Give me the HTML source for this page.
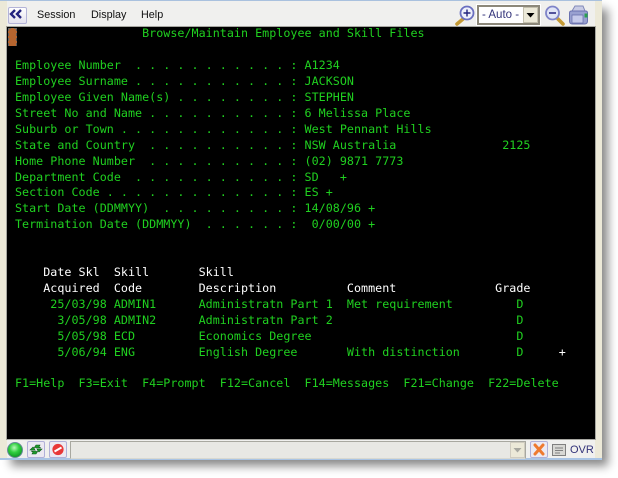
<!DOCTYPE html>
<html><head><meta charset="utf-8"><style>
html,body{margin:0;padding:0;background:#fff}
body{width:618px;height:478px;position:relative;overflow:hidden;font-family:"Liberation Sans",sans-serif}
div{position:absolute;box-sizing:border-box}
svg{position:absolute;overflow:visible}
.l{position:absolute;left:15px;margin:-1px 0 0;font:11.7px/14px "DejaVu Sans Mono","Liberation Mono",monospace;letter-spacing:.025px;color:#20d020;white-space:pre}
.w{color:#fff}
.m{position:absolute;top:9px;font-size:10.8px;line-height:13px;color:#111}
</style></head><body>
<div style="left:10px;top:8px;width:591px;height:451px;box-shadow:4px 4px 9px 3px #8a8a8a"></div>
<div style="left:0;top:0;width:602px;height:460px;background:#f0f0ee;border-top:1px solid #a9c1de;border-bottom:2px solid #a9c4e4"></div>
<div style="left:0;top:1px;width:7px;height:457px;background:#ece9d8"></div>
<div style="left:595px;top:1px;width:7px;height:457px;background:#ece9d8"></div>

<div style="left:8px;top:7px;width:19px;height:17px;background:linear-gradient(#fff,#e4e2ee);border:1px solid #b4b4d8;border-radius:2px"></div>
<svg style="left:0;top:0" width="40" height="26"><path d="M16 11l-4 4 4 4M22 11l-4 4 4 4" transform="translate(-1 -1)" fill="none" stroke="#23237f" stroke-width="2.4"/></svg>
<span class="m" style="left:37px">Session</span><span class="m" style="left:91px">Display</span><span class="m" style="left:141px">Help</span>

<svg style="left:454px;top:5px" width="22" height="22"><path d="M9 14l-6 5" stroke="#c49a35" stroke-width="3.6" stroke-linecap="round"/><circle cx="13" cy="8" r="6.5" fill="#eef0fb" stroke="#6a6fc0" stroke-width="1.8"/><path d="M9.5 8h7M13 4.5v7" stroke="#22227f" stroke-width="1.4"/></svg>
<div style="left:477px;top:5px;width:63px;height:20px;background:#fff;border:2px solid #8c887a;box-shadow:0 0 0 1px #fff"></div>
<span style="position:absolute;left:482px;top:9px;font-size:11.5px;line-height:13px;color:#33337a">- Auto -</span>
<div style="left:523px;top:7px;width:15px;height:16px;background:#ece9d8;border:1px solid #c4c0ae"></div>
<svg style="left:523px;top:7px" width="15" height="16"><path d="M3.5 6h8l-4 4.5z" fill="#000"/></svg>
<svg style="left:544px;top:5px" width="22" height="22"><path d="M14 14l5 5" stroke="#c49a35" stroke-width="3.6" stroke-linecap="round"/><circle cx="8.5" cy="8" r="6.5" fill="#e0e4f6" stroke="#7f84c8" stroke-width="1.8"/><path d="M5 8h7" stroke="#22227f" stroke-width="1.5"/></svg>
<svg style="left:568px;top:5px" width="22" height="22"><path d="M4 6l3-5h8l2 5z" fill="#c8cbe4" stroke="#8088b8"/><path d="M1.5 8q0-2 2-2h14q2 0 2 2v8q0 3-3 3h-12q-3 0-3-3z" fill="#98a0d0" stroke="#6a72b0"/><path d="M4 10h11v8H4z" fill="#c4c9ea" stroke="#646ca8" stroke-width=".7"/><path d="M16.5 8.5h3v4h-3z" fill="#2aa050"/></svg>

<div style="left:7px;top:27px;width:588px;height:412px;background:#000;box-shadow:0 0 0 1px #a6a6a0"></div>
<div style="left:8px;top:28px;width:9px;height:18px;background:#b5652f;border-top:1px dashed #666;border-left:1px dashed #666;border-right:1px dashed #555"></div>

<pre class="l" style="top:27px">                  Browse/Maintain Employee and Skill Files</pre>
<pre class="l" style="top:59px">Employee Number  . . . . . . . . . . . : A1234</pre>
<pre class="l" style="top:75px">Employee Surname . . . . . . . . . . . : JACKSON</pre>
<pre class="l" style="top:91px">Employee Given Name(s) . . . . . . . . : STEPHEN</pre>
<pre class="l" style="top:107px">Street No and Name . . . . . . . . . . : 6 Melissa Place</pre>
<pre class="l" style="top:123px">Suburb or Town . . . . . . . . . . . . : West Pennant Hills</pre>
<pre class="l" style="top:139px">State and Country  . . . . . . . . . . : NSW Australia               2125</pre>
<pre class="l" style="top:155px">Home Phone Number  . . . . . . . . . . : (02) 9871 7773</pre>
<pre class="l" style="top:171px">Department Code  . . . . . . . . . . . : SD   +</pre>
<pre class="l" style="top:186px">Section Code . . . . . . . . . . . . . : ES +</pre>
<pre class="l" style="top:202px">Start Date (DDMMYY)  . . . . . . . . . : 14/08/96 +</pre>
<pre class="l" style="top:218px">Termination Date (DDMMYY)  . . . . . . :  0/00/00 +</pre>
<pre class="l w" style="top:266px">    Date Skl  Skill       Skill</pre>
<pre class="l w" style="top:282px">    Acquired  Code        Description          Comment              Grade</pre>
<pre class="l" style="top:298px">     25/03/98 ADMIN1      Administratn Part 1  Met requirement         D</pre>
<pre class="l" style="top:314px">      3/05/98 ADMIN2      Administratn Part 2                          D</pre>
<pre class="l" style="top:330px">      5/05/98 ECD         Economics Degree                             D</pre>
<pre class="l" style="top:346px">      5/06/94 ENG         English Degree       With distinction        D     <span class="w">+</span></pre>
<pre class="l" style="top:377px">F1=Help  F3=Exit  F4=Prompt  F12=Cancel  F14=Messages  F21=Change  F22=Delete</pre>

<svg style="left:7px;top:442px" width="17" height="17"><defs><radialGradient id="g" cx=".45" cy=".35" r=".7"><stop offset="0" stop-color="#b8f8b8"/><stop offset=".45" stop-color="#30d040"/><stop offset="1" stop-color="#0a8a20"/></radialGradient></defs><circle cx="8" cy="8" r="7.5" fill="url(#g)" stroke="#6a8a9a"/></svg>
<div style="left:27px;top:441px;width:18px;height:17px;background:#ece9f2;border:1px solid #b0b0d8;border-radius:2px"></div>
<svg style="left:27px;top:441px" width="18" height="17"><path d="M3 9l3-3 1 1 2-3h4l-1 2 2 1h-5l-1-1-1 1 1 2zM15 8l-3 3-1-1-2 3H5l1-2-2-1h5l1 1 1-1-1-2z" fill="#1f9a2c" stroke="#0f5a18" stroke-width=".6"/></svg>
<div style="left:49px;top:441px;width:18px;height:17px;background:#ece9f2;border:1px solid #b0b0d8;border-radius:2px"></div>
<svg style="left:49px;top:441px" width="18" height="17"><circle cx="9" cy="8.5" r="5.6" fill="#e83838"/><path d="M5.5 10.5l7-4" stroke="#fff" stroke-width="2"/></svg>
<div style="left:70px;top:441px;width:456px;height:18px;background:#e8e8e4;border:1px solid #a8a8a0;border-bottom-color:#d8d8d0"></div>
<div style="left:510px;top:442px;width:15px;height:16px;background:#ece9d8;border:1px solid #d0ccc0"></div>
<svg style="left:510px;top:442px" width="15" height="16"><path d="M3.5 6h8l-4 4.5z" fill="#a8a8a0"/></svg>
<div style="left:530px;top:441px;width:18px;height:17px;background:#ece9f2;border:1px solid #b0b0d8;border-radius:2px"></div>
<svg style="left:530px;top:441px" width="18" height="17"><path d="M5 4l8 9M13 4l-8 9" stroke="#ee7a30" stroke-width="3" stroke-linecap="round"/></svg>
<svg style="left:552px;top:444px" width="14" height="12"><rect x=".5" y=".5" width="13" height="11" fill="#d8d8d4" stroke="#808080"/><path d="M3 4h8M3 6.5h8M3 9h5" stroke="#808080"/></svg>
<span style="position:absolute;left:570px;top:444px;font-size:11px;line-height:13px;color:#33337a">OVR</span>
</body></html>
